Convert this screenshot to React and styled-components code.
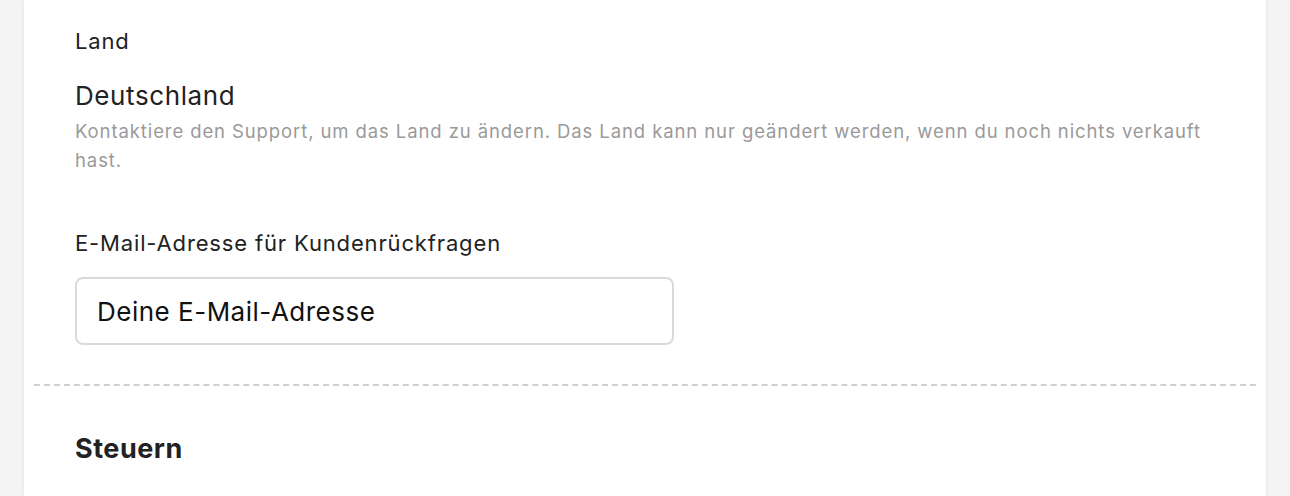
import React from "react";
import styled, { createGlobalStyle } from "styled-components";

const GlobalStyle = createGlobalStyle`
  html, body {
    margin: 0;
    padding: 0;
    background: #f4f4f4;
    font-family: Inter, "Noto Sans", "Liberation Sans", sans-serif;
    -webkit-font-smoothing: antialiased;
  }
`;

const Page = styled.div`
  display: flex;
  justify-content: flex-start;
  padding: 0 24px;
  height: 496px;
  overflow: hidden;
`;

const Card = styled.div`
  width: 1242px;
  background: #ffffff;
  box-shadow: 0 0 4px rgba(0, 0, 0, 0.09);
  display: flex;
  flex-direction: column;
`;

const Section = styled.section`
  padding: ${(p) => p.$pad || "0 51px"};
  display: flex;
  flex-direction: column;
`;

const FieldLabel = styled.div`
  font-size: 22px;
  line-height: 28px;
  letter-spacing: 0.85px;
  color: #222;
  margin-bottom: ${(p) => p.$gap || "0"};
`;

const Value = styled.div`
  font-size: 26px;
  line-height: 34px;
  letter-spacing: 0.6px;
  color: #222;
`;

const Help = styled.p`
  margin: 4px 0 0;
  font-size: 18.5px;
  line-height: 29px;
  letter-spacing: 0.9px;
  color: #9a9a9a;
`;

const Field = styled.div`
  display: flex;
  flex-direction: column;
  margin-top: ${(p) => p.$mt || "0"};
`;

const Input = styled.input`
  box-sizing: border-box;
  width: 599px;
  height: 68px;
  padding: 0 20px;
  border: 2px solid #dadada;
  border-radius: 8px;
  font-family: inherit;
  font-size: 26px;
  letter-spacing: 0.5px;
  color: #111;
  background: #fff;
  outline: none;
  &::placeholder {
    color: #111;
  }
`;

const Divider = styled.hr`
  margin: 39px 10px 0;
  border: none;
  border-top: 2px dashed #cfcfcf;
  height: 0;
`;

const Heading = styled.h2`
  margin: 0;
  font-size: 27px;
  line-height: 34px;
  letter-spacing: 0.5px;
  font-weight: 700;
  color: #222;
`;

export default function App() {
  return (
    <>
      <GlobalStyle />
      <Page>
        <Card>
          <Section $pad="27px 51px 0">
            <FieldLabel $gap="24px">Land</FieldLabel>
            <Value>Deutschland</Value>
            <Help>
              Kontaktiere den Support, um das Land zu ändern. Das Land kann nur
              geändert werden, wenn du noch nichts verkauft hast.
            </Help>
            <Field $mt="54px">
              <FieldLabel $gap="20px">E-Mail-Adresse für Kundenrückfragen</FieldLabel>
              <Input placeholder="Deine E-Mail-Adresse" />
            </Field>
          </Section>
          <Divider />
          <Section $pad="46px 51px 0">
            <Heading>Steuern</Heading>
          </Section>
        </Card>
      </Page>
    </>
  );
}
